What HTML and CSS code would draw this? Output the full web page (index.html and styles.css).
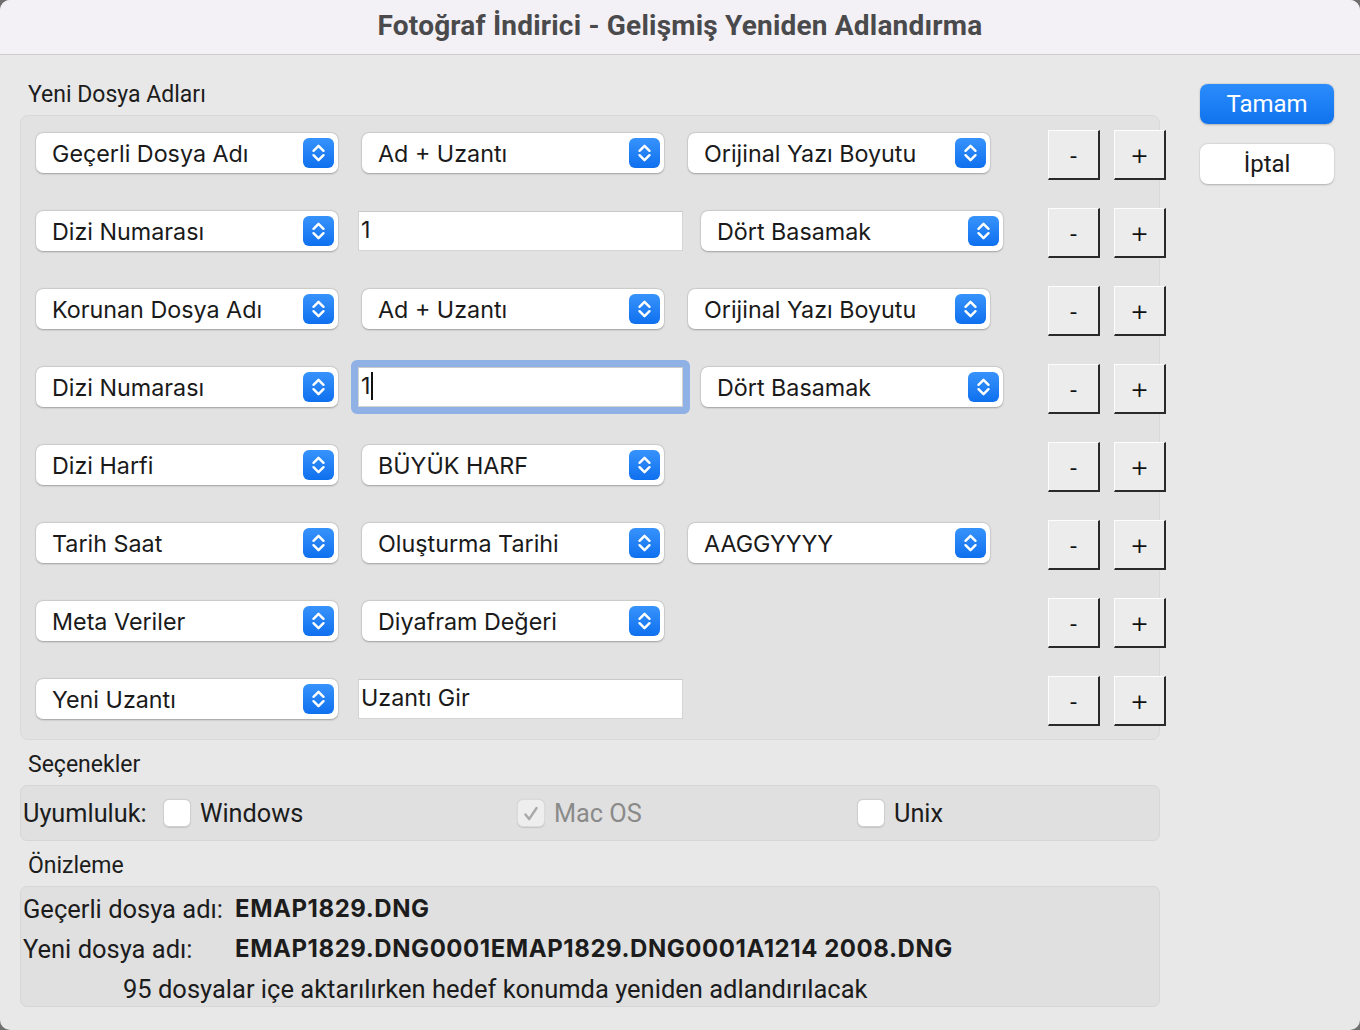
FILE: index.html
```html
<!DOCTYPE html>
<html lang="tr">
<head>
<meta charset="utf-8">
<title>Fotoğraf İndirici - Gelişmiş Yeniden Adlandırma</title>
<link rel="stylesheet" href="styles.css">
</head>
<body>
<svg width="0" height="0" class="defs">
  <symbol id="chev" viewBox="0 0 31 30">
    <path d="M10.5 12.8 L15.5 7.8 L20.5 12.8 M10.5 17.2 L15.5 22.2 L20.5 17.2" fill="none" stroke="#fff" stroke-width="2.4" stroke-linecap="round" stroke-linejoin="round"/>
  </symbol>
</svg>
<div class="window">
  <div class="titlebar">Fotoğraf İndirici - Gelişmiş Yeniden Adlandırma</div>
  <div class="content">
    <div class="main">
      <div class="section-label">Yeni Dosya Adları</div>
      <div class="group">
        <div class="row">
          <div class="popup"><span>Geçerli Dosya Adı</span><span class="step"><svg width="31" height="30"><use href="#chev"/></svg></span></div>
          <div class="popup gap24"><span>Ad + Uzantı</span><span class="step"><svg width="31" height="30"><use href="#chev"/></svg></span></div>
          <div class="popup gap24"><span>Orijinal Yazı Boyutu</span><span class="step"><svg width="31" height="30"><use href="#chev"/></svg></span></div>
          <div class="pm"><button class="bevel">-</button><button class="bevel">+</button></div>
        </div>
        <div class="row">
          <div class="popup"><span>Dizi Numarası</span><span class="step"><svg width="31" height="30"><use href="#chev"/></svg></span></div>
          <div class="field gap20">1</div>
          <div class="popup gap18"><span>Dört Basamak</span><span class="step"><svg width="31" height="30"><use href="#chev"/></svg></span></div>
          <div class="pm"><button class="bevel">-</button><button class="bevel">+</button></div>
        </div>
        <div class="row">
          <div class="popup"><span>Korunan Dosya Adı</span><span class="step"><svg width="31" height="30"><use href="#chev"/></svg></span></div>
          <div class="popup gap24"><span>Ad + Uzantı</span><span class="step"><svg width="31" height="30"><use href="#chev"/></svg></span></div>
          <div class="popup gap24"><span>Orijinal Yazı Boyutu</span><span class="step"><svg width="31" height="30"><use href="#chev"/></svg></span></div>
          <div class="pm"><button class="bevel">-</button><button class="bevel">+</button></div>
        </div>
        <div class="row">
          <div class="popup"><span>Dizi Numarası</span><span class="step"><svg width="31" height="30"><use href="#chev"/></svg></span></div>
          <div class="field gap20 focused">1<span class="caret"></span></div>
          <div class="popup gap18"><span>Dört Basamak</span><span class="step"><svg width="31" height="30"><use href="#chev"/></svg></span></div>
          <div class="pm"><button class="bevel">-</button><button class="bevel">+</button></div>
        </div>
        <div class="row">
          <div class="popup"><span>Dizi Harfi</span><span class="step"><svg width="31" height="30"><use href="#chev"/></svg></span></div>
          <div class="popup gap24"><span>BÜYÜK HARF</span><span class="step"><svg width="31" height="30"><use href="#chev"/></svg></span></div>
          <div class="pm"><button class="bevel">-</button><button class="bevel">+</button></div>
        </div>
        <div class="row">
          <div class="popup"><span>Tarih Saat</span><span class="step"><svg width="31" height="30"><use href="#chev"/></svg></span></div>
          <div class="popup gap24"><span>Oluşturma Tarihi</span><span class="step"><svg width="31" height="30"><use href="#chev"/></svg></span></div>
          <div class="popup gap24"><span>AAGGYYYY</span><span class="step"><svg width="31" height="30"><use href="#chev"/></svg></span></div>
          <div class="pm"><button class="bevel">-</button><button class="bevel">+</button></div>
        </div>
        <div class="row">
          <div class="popup"><span>Meta Veriler</span><span class="step"><svg width="31" height="30"><use href="#chev"/></svg></span></div>
          <div class="popup gap24"><span>Diyafram Değeri</span><span class="step"><svg width="31" height="30"><use href="#chev"/></svg></span></div>
          <div class="pm"><button class="bevel">-</button><button class="bevel">+</button></div>
        </div>
        <div class="row">
          <div class="popup"><span>Yeni Uzantı</span><span class="step"><svg width="31" height="30"><use href="#chev"/></svg></span></div>
          <div class="field gap20">Uzantı Gir</div>
          <div class="pm"><button class="bevel">-</button><button class="bevel">+</button></div>
        </div>
      </div>

      <div class="section-label">Seçenekler</div>
      <div class="options">
        <span class="opt-label">Uyumluluk:</span>
        <span class="opt opt-win"><span class="check"></span>Windows</span>
        <span class="opt opt-mac disabled"><span class="check checked"><svg width="28" height="28" viewBox="0 0 28 28"><path d="M8 14.5 L12 19.5 L20 7.5" fill="none" stroke="#a9a9a9" stroke-width="2.6" stroke-linecap="round" stroke-linejoin="round"/></svg></span>Mac OS</span>
        <span class="opt"><span class="check"></span>Unix</span>
      </div>

      <div class="section-label">Önizleme</div>
      <div class="preview">
        <div class="pline"><span class="plabel">Geçerli dosya adı:</span><span class="pval">EMAP1829.DNG</span></div>
        <div class="pline"><span class="plabel">Yeni dosya adı:</span><span class="pval">EMAP1829.DNG0001EMAP1829.DNG0001A1214 2008.DNG</span></div>
        <div class="pline pnote">95 dosyalar içe aktarılırken hedef konumda yeniden adlandırılacak</div>
      </div>
    </div>
    <div class="side">
      <button class="btn primary">Tamam</button>
      <button class="btn">İptal</button>
    </div>
  </div>
</div>
</body>
</html>
```

FILE: styles.css
```css
* { box-sizing: border-box; }
html, body { margin: 0; padding: 0; }
body {
  background: #6f6f6f;
  width: 1360px;
  height: 1030px;
  overflow: hidden;
}
.defs { position: absolute; }
.window {
  width: 1360px;
  height: 1030px;
  background: #e8e8e8;
  border-radius: 10px;
  overflow: hidden;
  font-family: "Roboto", "Liberation Sans", sans-serif;
  color: #1c1c1c;
}
.titlebar {
  height: 55px;
  background: #f3f1f5;
  border-bottom: 1px solid #cdcdcf;
  text-align: center;
  font-weight: 700;
  font-size: 28px;
  letter-spacing: 0.2px;
  line-height: 51px;
  color: #4a4a4c;
}
.content {
  display: flex;
  align-items: flex-start;
}
.main {
  margin-left: 20px;
  width: 1140px;
  padding-top: 28px;
}
.section-label {
  font-size: 23px;
  line-height: 24px;
  height: 24px;
  margin-left: 8px;
  margin-bottom: 8px;
  color: #1c1c1c;
}
.group {
  background: #e2e2e2;
  border: 1px solid #d9d9d9;
  border-radius: 8px;
  padding: 14px 0 13px 15px;
  margin-bottom: 13px;
}
.row {
  width: 1130px;
  height: 50px;
  display: flex;
  align-items: flex-start;
  margin-bottom: 28px;
}
.row:last-child { margin-bottom: 0; }
.popup {
  margin-top: 3px;
  width: 302px;
  height: 40px;
  background: #fff;
  border-radius: 7px;
  box-shadow: 0 0.5px 2px rgba(0,0,0,0.28), 0 0 0 0.5px rgba(0,0,0,0.06);
  display: flex;
  align-items: center;
  justify-content: space-between;
  padding: 0 4px 0 16px;
  font-family: "Inter", "Noto Sans", sans-serif;
  font-size: 23.3px;
  color: #1a1a1a;
}
.step {
  width: 31px;
  height: 30px;
  border-radius: 6px;
  background: linear-gradient(#3793fb, #0f70ef);
  display: flex;
}
.gap24 { margin-left: 24px; }
.gap20 { margin-left: 20px; }
.gap18 { margin-left: 18px; }
.field {
  position: relative;
  margin-top: 3px;
  width: 325px;
  height: 40px;
  background: #fff;
  border: 1px solid #d4d4d4;
  border-top-color: #c9c9c9;
  padding-left: 2px;
  font-family: "Inter", "Noto Sans", sans-serif;
  font-size: 23.3px;
  line-height: 36px;
  color: #1a1a1a;
}
.field.focused::after {
  content: "";
  position: absolute;
  left: -8px; top: -8px; right: -8px; bottom: -8px;
  border: 7px solid #8fb1e6;
  border-radius: 6px;
}
.caret {
  display: inline-block;
  width: 2px;
  height: 28px;
  background: #111;
  vertical-align: -6px;
  margin-left: 1px;
}
.pm {
  margin-left: auto;
  display: flex;
  gap: 14px;
}
.bevel {
  width: 52px;
  height: 50px;
  background: #ececec;
  border-top: 1px solid #fdfdfd;
  border-left: 1px solid #fdfdfd;
  border-right: 2px solid #2a2a2a;
  border-bottom: 2px solid #2a2a2a;
  font-family: "DejaVu Sans", sans-serif;
  font-size: 22px;
  line-height: 44px;
  padding: 2px 0 0 0;
  color: #111;
}
.options {
  height: 56px;
  background: #e0e0e0;
  border: 1px solid #d6d6d6;
  border-radius: 7px;
  display: flex;
  align-items: center;
  padding-left: 2px;
  margin-bottom: 13px;
  font-size: 25.3px;
}
.opt-label { width: 140px; }
.opt { display: flex; align-items: center; }
.opt-win { width: 354px; }
.opt-mac { width: 340px; }
.check {
  width: 28px;
  height: 28px;
  border-radius: 6px;
  background: #fff;
  border: 1px solid #cfcfcf;
  box-shadow: 0 0.5px 1px rgba(0,0,0,0.12);
  margin-right: 9px;
  display: flex;
}
.disabled { color: #8a8a8a; }
.check.checked {
  background: #eeeeee;
  border-color: #dadada;
}
.preview {
  height: 121px;
  background: #e0e0e0;
  border: 1px solid #d6d6d6;
  border-radius: 7px;
  padding-top: 2px;
  padding-left: 2px;
  font-size: 25.5px;
}
.pline {
  display: flex;
  height: 40px;
  line-height: 40px;
}
.plabel { width: 212px; }
.pval {
  font-family: "Inter", "Noto Sans", sans-serif;
  font-weight: 700;
  font-size: 24px;
  letter-spacing: 0.55px;
}
.pnote { padding-left: 100px; }
.side {
  margin-left: 40px;
  padding-top: 29px;
  width: 134px;
  display: flex;
  flex-direction: column;
  gap: 20px;
}
.btn {
  width: 134px;
  height: 40px;
  border: none;
  border-radius: 8px;
  background: #fff;
  box-shadow: 0 0.5px 2px rgba(0,0,0,0.25);
  font-family: "Roboto", sans-serif;
  font-size: 24px;
  color: #1a1a1a;
  padding: 0;
}
.btn.primary {
  background: linear-gradient(#2b8cfc, #0f73ee);
  color: #fff;
}
```
